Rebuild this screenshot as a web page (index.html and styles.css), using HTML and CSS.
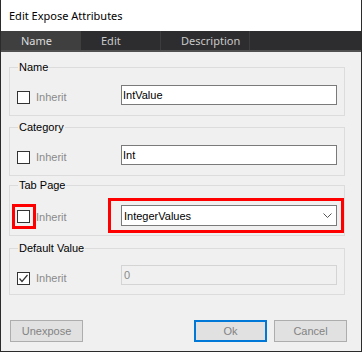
FILE: index.html
```html
<!DOCTYPE html>
<html>
<head>
<meta charset="utf-8">
<link rel="stylesheet" href="styles.css">
</head>
<body>
<div class="window">
  <div class="titlebar">Edit Expose Attributes</div>
  <div class="tabs">
    <div class="tab tab-active">Name</div>
    <div class="tab">Edit</div>
    <div class="tab tab-wide">Description</div>
  </div>
  <div class="content">
    <div class="group group-name">
      <div class="legend">Name</div>
      <div class="row">
        <div class="check"><span class="box"></span><span class="check-label">Inherit</span></div>
        <div class="input">IntValue</div>
      </div>
    </div>
    <div class="group group-cat">
      <div class="legend">Category</div>
      <div class="row">
        <div class="check"><span class="box"></span><span class="check-label">Inherit</span></div>
        <div class="input">Int</div>
      </div>
    </div>
    <div class="group group-tab">
      <div class="legend">Tab Page</div>
      <div class="row">
        <div class="check check-tab"><span class="box"></span><span class="check-label">Inherit</span></div>
        <div class="combo">
          <span class="combo-text">IntegerValues</span>
          <svg class="chevron" width="9" height="5" viewBox="0 0 9 5"><path d="M0.5 0.5 L4.5 4.5 L8.5 0.5" fill="none" stroke="#555" stroke-width="1"/></svg>
        </div>
      </div>
      <div class="mark mark-check"></div>
      <div class="mark mark-combo"></div>
    </div>
    <div class="group group-def">
      <div class="legend">Default Value</div>
      <div class="row">
        <div class="check check-def"><span class="box box-checked"><svg width="11" height="11" viewBox="0 0 11 11"><path d="M1.5 5.5 L4 8.5 L9.5 2" fill="none" stroke="#333" stroke-width="1.2"/></svg></span><span class="check-label">Inherit</span></div>
        <div class="input input-disabled">0</div>
      </div>
    </div>
    <div class="buttons">
      <div class="btn">Unexpose</div>
      <div class="spacer"></div>
      <div class="btn btn-default">Ok</div>
      <div class="btn">Cancel</div>
    </div>
  </div>
</div>
</body>
</html>
```
FILE: styles.css
```css
html, body {
  margin: 0;
  padding: 0;
  background: #f0f0f0;
}
.window {
  width: 362px;
  height: 352px;
  box-sizing: border-box;
  border: 1px solid #2b2b2b;
  border-top: none;
  background: #f0f0f0;
  font-family: "Liberation Sans", Arial, sans-serif;
  font-size: 11px;
  color: #000;
  display: flex;
  flex-direction: column;
}
.titlebar {
  height: 31px;
  line-height: 31px;
  background: #fff;
  padding-left: 8px;
  font-family: "Noto Sans", sans-serif;
  font-size: 11px;
  color: #000;
}
.tabs {
  height: 19px;
  background: #2d2d30;
  border-bottom: 2px solid #505050;
  display: flex;
  font-family: "Noto Sans", sans-serif;
  font-size: 11px;
  line-height: 19px;
  color: #c8c8c8;
}
.tab {
  width: 80px;
  padding-left: 20px;
  box-sizing: border-box;
  border-right: 1px solid #3c3c3e;
}
.tab-active {
  background: #3f3f3f;
  color: #dcdcdc;
  border-right-color: #3f3f3f;
}
.tab-wide {
  width: 89px;
}
.content {
  flex: 1;
  display: flex;
  flex-direction: column;
  padding: 15px 14px 0 8px;
}
.group {
  position: relative;
  border: 1px solid #dcdcdc;
  margin-right: 2px;
  padding: 0 7px 10px 7px;
}
.legend {
  align-self: flex-start;
  width: max-content;
  margin: -9px 0 10px 1px;
  padding: 0 1px;
  line-height: 16px;
  background: #f0f0f0;
}
.group-cat {
  margin-top: 11px;
}
.group-tab {
  margin-top: 9px;
  padding-bottom: 9px;
}
.group-tab .legend {
  margin-bottom: 12px;
}
.group-def {
  margin-top: 12px;
  padding-bottom: 9px;
}
.group-def .legend {
  margin-bottom: 9px;
}
.row {
  display: flex;
  align-items: center;
}
.check {
  display: flex;
  align-items: center;
  margin-top: 4px;
}
.check-tab {
  margin-top: 2px;
}
.check-def {
  margin-top: 6px;
}
.box {
  width: 11px;
  height: 11px;
  border: 1px solid #333;
  background: #fff;
  display: flex;
  align-items: center;
  justify-content: center;
}
.box-checked {
  background: #fff;
}
.check-label {
  margin-left: 6px;
  color: #8a8a8a;
}
.input {
  margin-left: auto;
  width: 216px;
  height: 20px;
  box-sizing: border-box;
  border: 1px solid #7a7a7a;
  background: #fff;
  padding-left: 1px;
  line-height: 18px;
}
.input-disabled {
  border-color: #d4d4d4;
  background: #f0f0f0;
  color: #8a8a8a;
  padding-left: 2px;
}
.combo {
  margin-left: auto;
  width: 216px;
  height: 21px;
  box-sizing: border-box;
  border: 1px solid #7a7a7a;
  background: #fff;
  padding: 0 4px 0 2px;
  display: flex;
  align-items: center;
  justify-content: space-between;
}
.chevron {
  display: block;
}
.mark {
  position: absolute;
  border: 3px solid #ff0000;
  box-sizing: border-box;
}
.mark-check {
  left: 2px;
  top: 18px;
  width: 24px;
  height: 25px;
}
.mark-combo {
  left: 98px;
  top: 12px;
  width: 236px;
  height: 35px;
}
.buttons {
  display: flex;
  margin-top: 25px;
  padding-left: 1px;
  gap: 7px;
}
.spacer {
  flex: 1;
}
.btn {
  width: 73px;
  height: 22px;
  box-sizing: border-box;
  border: 1px solid #adadad;
  background: #e1e1e1;
  color: #838383;
  text-align: center;
  line-height: 20px;
}
.btn-default {
  border: 2px solid #0078d7;
  line-height: 18px;
}
```
